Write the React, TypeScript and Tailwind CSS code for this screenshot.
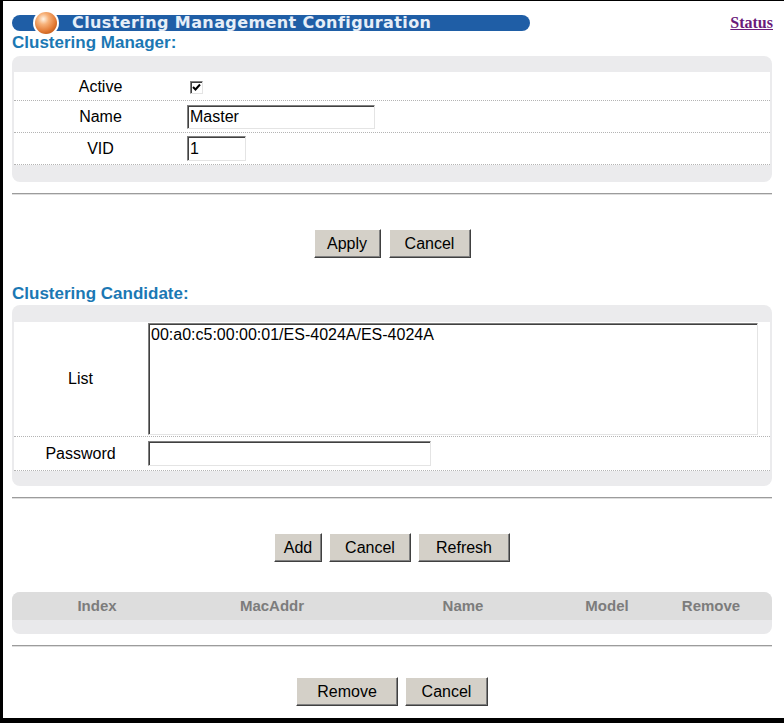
import React from "react";

const sunken =
  "border border-t-[#808080] border-l-[#808080] border-r-[#e4e4e4] border-b-[#e4e4e4] shadow-[inset_1px_1px_0_#404040] bg-white outline-none";

function Button({ w, children }: { w: string; children: React.ReactNode }) {
  return (
    <button
      className={`${w} h-[29px] bg-[#d4d0c8] border border-t-white border-l-white border-r-[#404040] border-b-[#404040] shadow-[inset_-1px_-1px_0_#808080] text-[16px] leading-none text-black`}
    >
      {children}
    </button>
  );
}

function Separator() {
  return <div className="h-0 border-t border-b border-t-[#9c9c9c] border-b-[#dedede]" />;
}

function Ball() {
  return (
    <svg width="26" height="26" viewBox="0 0 26 26" className="shrink-0">
      <defs>
        <radialGradient id="ball" cx="0.38" cy="0.32" r="0.7">
          <stop offset="0" stopColor="#fff4e6" />
          <stop offset="0.35" stopColor="#f7b27a" />
          <stop offset="0.8" stopColor="#e27a35" />
          <stop offset="1" stopColor="#c9621f" />
        </radialGradient>
      </defs>
      <circle cx="13" cy="13" r="13" fill="#ffffff" />
      <circle cx="13" cy="13" r="11" fill="url(#ball)" />
    </svg>
  );
}

function Checkbox() {
  return (
    <div className={`w-[13px] h-[13px] ${sunken} flex items-center justify-center`}>
      <svg width="9" height="9" viewBox="0 0 9 9">
        <polyline points="1,4 3.5,6.5 8,1.5" fill="none" stroke="#000" strokeWidth="2" />
      </svg>
    </div>
  );
}

export default function App() {
  return (
    <div className="w-[784px] h-[723px] bg-white border-t border-l-[3px] border-b-[5px] border-black font-['Liberation_Sans',Arial,sans-serif] text-black overflow-hidden">
      <div className="pl-[9px] pr-[12px]">
        {/* title bar */}
        <div className="mt-[11px] h-[22px] flex items-center justify-between">
          <div className="w-[518px] h-[16px] rounded-full bg-[#1f5ea6] flex items-center">
            <div className="ml-[21px] -my-[5px]">
              <Ball />
            </div>
            <span className="ml-[13px] font-['DejaVu_Sans',Verdana,sans-serif] font-bold text-[16px] tracking-[0.4px] leading-none text-[#e6eef8]">
              Clustering Management Configuration
            </span>
          </div>
          <a
            href="#"
            className="mr-[-1px] font-['Liberation_Serif',serif] font-bold text-[16px] text-[#6a1a7a] underline"
          >
            Status
          </a>
        </div>

        <h2 className="h-[18px] leading-[18px] font-bold text-[17px] text-[#1b78b4]">Clustering Manager:</h2>

        <div className="mt-[4px] rounded-[8px] bg-[#ebebed] overflow-hidden">
          <div className="h-[16px]" />
          <div className="mx-[2px] bg-white text-[16px]">
            <div className="h-[29px] flex items-center border-b border-dotted border-[#b4b4b4] pt-[2px]">
              <div className="w-[173px] text-center">Active</div>
              <div className="ml-[3px]">
                <Checkbox />
              </div>
            </div>
            <div className="h-[32px] flex items-center border-b border-dotted border-[#b4b4b4]">
              <div className="w-[173px] text-center">Name</div>
              <input defaultValue="Master" className={`w-[188px] h-[24px] px-[2px] text-[16px] ${sunken}`} />
            </div>
            <div className="h-[32px] flex items-center border-b border-dotted border-[#b4b4b4]">
              <div className="w-[173px] text-center">VID</div>
              <input defaultValue="1" className={`w-[59px] h-[25px] px-[2px] text-[16px] ${sunken}`} />
            </div>
          </div>
          <div className="h-[17px]" />
        </div>

        <div className="mt-[11px]">
          <Separator />
        </div>

        <div className="mt-[34px] flex justify-center gap-[8px]">
          <Button w="w-[67px]">Apply</Button>
          <Button w="w-[82px]">Cancel</Button>
        </div>

        <h2 className="mt-[27px] h-[18px] leading-[18px] font-bold text-[17px] text-[#1b78b4]">Clustering Candidate:</h2>

        <div className="mt-[2px] rounded-[8px] bg-[#ebebed] overflow-hidden">
          <div className="h-[17px]" />
          <div className="mx-[2px] bg-white text-[16px]">
            <div className="h-[115px] flex items-start border-b border-dotted border-[#b4b4b4]">
              <div className="w-[133px] self-center text-center">List</div>
              <textarea
                defaultValue="00:a0:c5:00:00:01/ES-4024A/ES-4024A"
                className={`ml-[1px] mt-[1px] w-[610px] h-[112px] px-[2px] pt-[1px] text-[16px] leading-[19px] resize-none ${sunken}`}
              />
            </div>
            <div className="h-[34px] flex items-center border-b border-dotted border-[#b4b4b4]">
              <div className="w-[133px] text-center">Password</div>
              <input type="password" className={`ml-[1px] w-[283px] h-[25px] px-[2px] text-[16px] ${sunken}`} />
            </div>
          </div>
          <div className="h-[15px]" />
        </div>

        <div className="mt-[11px]">
          <Separator />
        </div>

        <div className="mt-[34px] flex justify-center gap-[7px]">
          <Button w="w-[48px]">Add</Button>
          <Button w="w-[82px]">Cancel</Button>
          <Button w="w-[92px]">Refresh</Button>
        </div>

        {/* member table */}
        <div className="mt-[30px] rounded-[8px] overflow-hidden bg-[#e9e9eb]">
          <div className="h-[28px] bg-[#dddddd] flex items-center text-[15px] font-bold text-[#7c7c7c]">
            <div className="w-[170px] text-center">Index</div>
            <div className="w-[180px] text-center">MacAddr</div>
            <div className="w-[202px] text-center">Name</div>
            <div className="w-[86px] text-center">Model</div>
            <div className="w-[122px] text-center">Remove</div>
          </div>
          <div className="h-[14px]" />
        </div>

        <div className="mt-[11px]">
          <Separator />
        </div>

        <div className="mt-[30px] flex justify-center gap-[7px]">
          <Button w="w-[102px]">Remove</Button>
          <Button w="w-[83px]">Cancel</Button>
        </div>
      </div>
    </div>
  );
}
